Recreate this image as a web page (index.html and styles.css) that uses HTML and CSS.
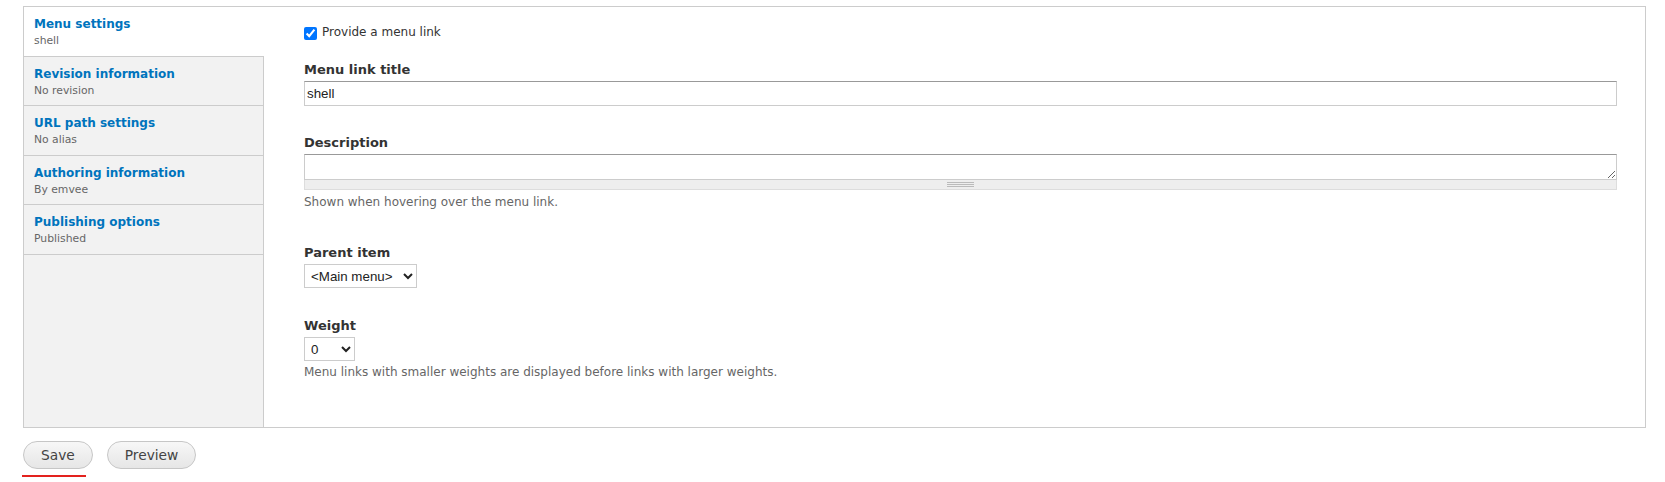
FILE: index.html
```html
<!DOCTYPE html>
<html lang="en">
<head>
<meta charset="utf-8">
<title>Edit content</title>
<link rel="stylesheet" href="styles.css">
</head>
<body>
<div class="page">
  <form class="node-form">
    <div class="vtabs">
      <ul class="vtabs-menu">
        <li class="vtab is-selected"><a href="#menu"><strong class="vtab-title">Menu settings</strong><span class="vtab-summary">shell</span></a></li>
        <li class="vtab"><a href="#revision"><strong class="vtab-title">Revision information</strong><span class="vtab-summary">No revision</span></a></li>
        <li class="vtab"><a href="#path"><strong class="vtab-title">URL path settings</strong><span class="vtab-summary">No alias</span></a></li>
        <li class="vtab"><a href="#author"><strong class="vtab-title">Authoring information</strong><span class="vtab-summary">By emvee</span></a></li>
        <li class="vtab"><a href="#options"><strong class="vtab-title">Publishing options</strong><span class="vtab-summary">Published</span></a></li>
      </ul>
      <div class="pane" id="menu">
        <div class="check-row">
          <input type="checkbox" id="menu-enabled" checked>
          <label for="menu-enabled">Provide a menu link</label>
        </div>
        <div class="form-item form-item--title">
          <label class="form-label" for="menu-title">Menu link title</label>
          <input class="form-text" id="menu-title" type="text" value="shell">
        </div>
        <div class="form-item form-item--desc">
          <label class="form-label" for="menu-desc">Description</label>
          <textarea class="form-textarea" id="menu-desc"></textarea>
          <div class="grippie"></div>
          <div class="description">Shown when hovering over the menu link.</div>
        </div>
        <div class="form-item form-item--parent">
          <label class="form-label" for="menu-parent">Parent item</label>
          <select class="form-select form-select--parent" id="menu-parent">
            <option>&lt;Main menu&gt;</option>
          </select>
        </div>
        <div class="form-item form-item--weight">
          <label class="form-label" for="menu-weight">Weight</label>
          <select class="form-select form-select--weight" id="menu-weight">
            <option>0</option>
          </select>
          <div class="description description--tight">Menu links with smaller weights are displayed before links with larger weights.</div>
        </div>
      </div>
    </div>
    <div class="actions">
      <button type="button" class="button">Save</button>
      <button type="button" class="button">Preview</button>
    </div>
    <div class="focus-line"></div>
  </form>
</div>
</body>
</html>
```
FILE: styles.css
```css
html, body {
  margin: 0;
  padding: 0;
  background: #fff;
}

body {
  font-family: "DejaVu Sans", "Noto Sans", sans-serif;
  font-size: 12px;
  color: #333;
}

.page {
  padding: 6px 19px 0 23px;
}

.vtabs {
  display: flex;
  border: 1px solid #ccc;
  min-height: 422px;
  box-sizing: border-box;
}

.vtabs-menu {
  flex: none;
  width: 240px;
  box-sizing: border-box;
  margin: 0;
  padding: 0;
  list-style: none;
  background: #f2f2f2;
  border-right: 1px solid #ccc;
}

.vtab {
  border-bottom: 1px solid #ccc;
}

.vtab.is-selected {
  background: #fff;
  margin-right: -1px;
}

.vtab a {
  display: block;
  padding: 8px 10px 6.5px;
  text-decoration: none;
}

.vtab-title {
  display: block;
  font-size: 12px;
  line-height: 18px;
  font-weight: bold;
  color: #0074bd;
}

.vtab-summary {
  display: block;
  font-size: 10.8px;
  line-height: 16px;
  color: #666;
}

.pane {
  flex: 1;
  min-width: 0;
  padding: 16px 28px 0 40px;
}

.check-row {
  display: flex;
  align-items: flex-start;
  line-height: 18px;
  font-size: 12px;
}

.check-row input {
  margin: 4px 5px 0 0;
  width: 13px;
  height: 13px;
}

.form-item--title { margin-top: 20px; }
.form-item--desc { margin-top: 28px; }
.form-item--parent { margin-top: 33px; }
.form-item--weight { margin-top: 29px; }

.form-label {
  display: block;
  font-size: 13px;
  line-height: 18px;
  font-weight: bold;
  color: #333;
  margin-bottom: 2px;
}

.form-text,
.form-textarea {
  display: block;
  width: 100%;
  box-sizing: border-box;
  margin: 0;
  border: 1px solid #ccc;
  border-top-color: #999;
  border-radius: 0;
  padding: 1px 2px;
  font-family: "Liberation Sans", Arial, sans-serif;
  font-size: 13.33px;
  color: #222;
  background: #fff;
}

.form-text {
  height: 25px;
}

.form-textarea {
  height: 26px;
  resize: vertical;
}

.grippie {
  height: 9px;
  border: 1px solid #ddd;
  border-top: none;
  background-color: #eee;
  background-image: repeating-linear-gradient(to bottom, #bbb 0, #bbb 1px, transparent 1px, transparent 2px);
  background-size: 27px 5px;
  background-position: center 2px;
  background-repeat: no-repeat;
}

.description {
  margin-top: 4px;
  font-size: 12px;
  line-height: 17px;
  color: #666;
}

.description--tight {
  margin-top: 3px;
}

.form-select {
  display: block;
  height: 24px;
  box-sizing: border-box;
  margin: 0;
  border: 1px solid #ccc;
  border-radius: 0;
  padding: 0 2px;
  background-color: #fff;
  font-family: "Liberation Sans", Arial, sans-serif;
  font-size: 13.33px;
  color: #222;
}

.form-select--parent { width: 113px; }
.form-select--weight { width: 51px; }

.actions {
  display: flex;
  gap: 14px;
  margin-top: 13px;
}

.button {
  height: 28px;
  box-sizing: border-box;
  margin: 0;
  padding: 0 17px;
  border: 1px solid #c6c6c6;
  border-radius: 20em;
  background: linear-gradient(to bottom, #f7f7f7, #e6e6e6);
  font-family: "DejaVu Sans", "Noto Sans", sans-serif;
  font-size: 13.75px;
  line-height: 26px;
  color: #444;
  cursor: pointer;
}

.focus-line {
  width: 64px;
  height: 2px;
  margin: 6px 0 0 -1px;
  background: #e3221e;
}
```
